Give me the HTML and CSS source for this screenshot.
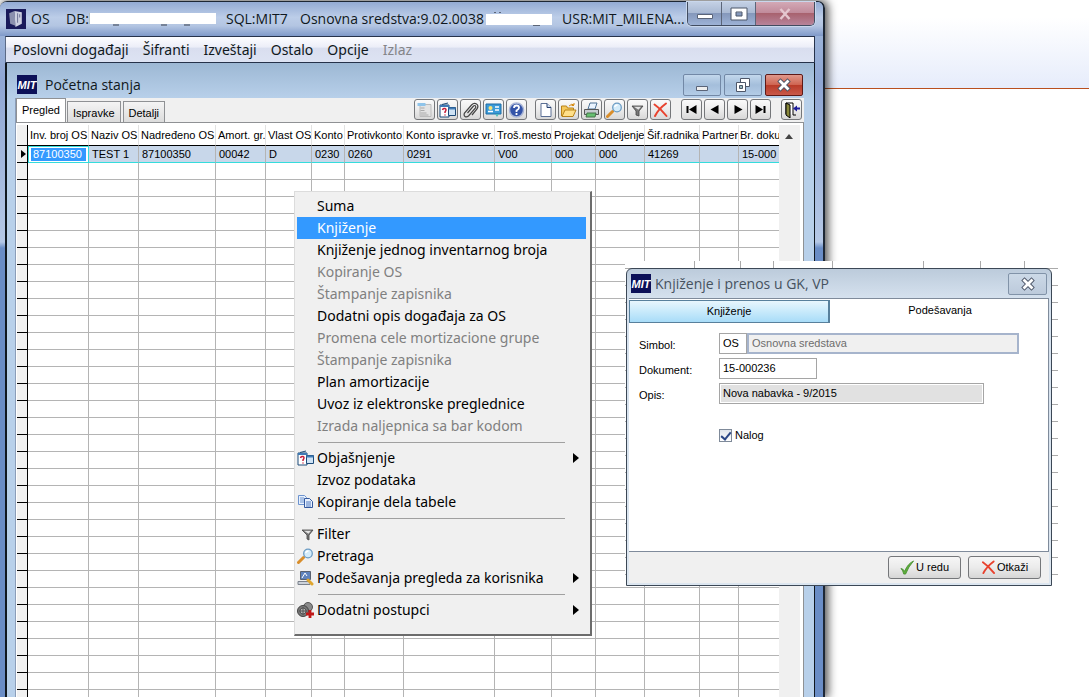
FILE: index.html
```html
<!DOCTYPE html>
<html lang="sr">
<head>
<meta charset="utf-8">
<title>OS - Početna stanja</title>
<link rel="stylesheet" href="styles.css">
</head>
<body>
<svg class="defs" aria-hidden="true">
  <symbol id="i-windows" viewBox="0 0 17 16"><path d="M1 3h9v12H1z" fill="#fff" stroke="#1c4a78"/><path d="M1 3h9v2H1z" fill="#3f7ab5"/><path d="M3 2.500 9 1" stroke="#1c4a78"/><path d="M9.500 5.500h7v8h-7z" fill="#cfe3f5" stroke="#1c4a78"/><path d="M9.500 5.500h7v2h-7z" fill="#3f7ab5"/><path d="M3.500 8q.500-2 2.500-1.500t0 3.500v1M6 12.500v1" stroke="#c8203c" stroke-width="1.500" fill="none"/></symbol>
  <symbol id="i-lens" viewBox="0 0 17 16"><path d="m1.500 14.500 5-5" stroke="#d98e2b" stroke-width="3" stroke-linecap="round"/><circle cx="11" cy="5.500" r="4.300" fill="#d4ecfa" stroke="#6b9cc4" stroke-width="1.300"/><path d="M8.500 5q1-2 3-2" stroke="#fff" stroke-width="1.300" fill="none"/></symbol>
  <symbol id="i-funnel" viewBox="0 0 17 16"><path d="M5 4h11l-4 5v5l-2-1V9z" fill="#777" stroke="#444" stroke-width=".8"/><path d="M7 4.800h7l-2.500 3z" fill="#e4e4e4"/></symbol>
  <symbol id="i-cross" viewBox="0 0 16 16"><path d="M2 2.500q6 4 12 11.500M13.500 1.500Q6 7 2.500 14" stroke="#e8422e" stroke-width="2" fill="none" stroke-linecap="round"/></symbol>
  <symbol id="i-close" viewBox="0 0 16 14"><path d="m4.500 3.500 7 7M11.500 3.500l-7 7" stroke="#4d5668" stroke-width="4.600" stroke-linecap="square"/><path d="m4.500 3.500 7 7M11.500 3.500l-7 7" stroke="#fff" stroke-width="2.800" stroke-linecap="square"/></symbol>
</svg>

<div class="desktop">
  <div class="ribbon"></div>

  <section class="window">
    <header class="titlebar">
      <svg class="app-icon" viewBox="0 0 19 19"><rect width="19" height="19" fill="#191a5a"/><path d="m3 4 5-2 1 14-5-2z" fill="#8b90ae"/><path d="m8 2 7 1v11l-6 3z" fill="#cdd0e0"/><path d="M11 4v9M13 5v3" stroke="#73789a"/></svg>
      <span class="t-name">OS</span>
      <span class="t-db">DB:l</span>
      <svg class="mask mask-long" viewBox="0 0 126 14"><rect width="126" height="11" y="1" fill="#fff"/><path d="M23 13h6M71 13h6M94 13h6" stroke="#39414f"/></svg>
      <span class="t-sql">SQL:MIT7</span>
      <span class="t-ver">Osnovna sredstva:9.02.0038</span>
      <svg class="mask mask-short" viewBox="0 0 66 14"><path d="M8 .5h2M13 .5h2M47 13.500h7" stroke="#5b6577"/><rect width="66" height="11" y="2" fill="#fff"/></svg>
      <span class="t-usr">USR:MIT_MILENA...</span>
      <div class="caption">
        <button aria-label="Minimize"><svg viewBox="0 0 18 14"><path d="M1.500 7.500h15v4h-15z" fill="#fff" stroke="#5a6478"/></svg></button>
        <button aria-label="Maximize"><svg viewBox="0 0 18 14"><path d="M1 1h16v12H1zM6 5h6v4H6z" fill="#fff" fill-rule="evenodd" stroke="#4d5668"/></svg></button>
        <button class="cap-close" aria-label="Close"><svg viewBox="0 0 16 14"><path d="m3.500 2 9 10M12.500 2l-9 10" stroke="#e4c6ce" stroke-width="2.500"/></svg></button>
      </div>
    </header>

    <nav class="menubar">
      <button>Poslovni događaji</button><button>Šifranti</button><button>Izveštaji</button><button>Ostalo</button><button>Opcije</button><button disabled>Izlaz</button>
    </nav>

    <div class="child">
      <header class="child-title">
        <span class="mit">MIT</span>
        <h1>Početna stanja</h1>
        <div class="child-caption">
          <button aria-label="Minimize"><svg viewBox="0 0 16 14"><path d="M2.500 8.500h11v4h-11z" fill="#eee" stroke="#5a6478"/></svg></button>
          <button aria-label="Restore"><svg viewBox="0 0 16 14"><path d="M5.500.500h9v8h-9z" fill="#fff" stroke="#4d5668"/><path d="M1.500 4.500h9v9h-9z" fill="#fff" stroke="#4d5668"/><path d="M4.500 7.500h3v3h-3z" fill="#9bb" stroke="#4d5668"/></svg></button>
          <button class="red" aria-label="Close"><svg><use href="#i-close"/></svg></button>
        </div>
      </header>

      <div class="child-body">
        <div class="toolrow">
          <div class="tabs"><button class="active">Pregled</button><button>Ispravke</button><button>Detalji</button></div>
          <div class="tools">
            <div class="group">
              <button aria-label="Forma"><svg viewBox="0 0 16 16"><path d="M3.500 2.500h11v12h-11z" fill="#e3e3e3" stroke="#bbb"/><path d="M1 1h8v3H1z" fill="#8fc4ea"/><path d="M4 6h4M4 8.500h4M4 11h6M4 13h8" stroke="#aaa"/></svg></button>
              <button aria-label="Objašnjenje"><svg><use href="#i-windows"/></svg></button>
              <button aria-label="Prilog"><svg viewBox="0 0 16 16"><path d="m5 11 6-7q1.500-1 2 0t0 2l-7 8q-2 1.500-3.500.500T2 11l7-8q2.500-2.500 5-1t.500 5l-5 6" fill="none" stroke="#444" stroke-width="1.200"/></svg></button>
              <button aria-label="Kartica"><svg viewBox="0 0 17 16"><path d="M1 2h15v10H1z" fill="#3b9bd8" stroke="#1e6ca6"/><circle cx="5.500" cy="6" r="2" fill="#f6e27a"/><path d="M3 9.500h5M10 5h4M10 8h4" stroke="#fff" stroke-width="1.500"/><path d="m10 12 2 3 2-3z" fill="#5bb"/></svg></button>
              <button aria-label="Pomoć"><svg viewBox="0 0 16 16"><circle cx="8" cy="8" r="7" fill="#3454a8" stroke="#a9b5d6" stroke-width="1.500"/><path d="M5.500 6q0-2.500 2.500-2.500t2.500 2.200Q10.500 7 8 8.500V10M8 11v2" stroke="#fff" stroke-width="1.800" fill="none"/></svg></button>
            </div>
            <div class="group">
              <button aria-label="Novi"><svg viewBox="0 0 16 16"><path d="M3.500 1.500h6l4 4v9h-10z" fill="#fff" stroke="#5b6f94"/><path d="M9.500 1.500v4h4" fill="#cfdcf2" stroke="#27406e"/></svg></button>
              <button aria-label="Otvori"><svg viewBox="0 0 17 16"><path d="M1.500 14V4h5l1 2h6v3" fill="#f5c95c" stroke="#b98318"/><path d="m2 14.500 3-6.500h11l-3 6.500z" fill="#ffe08a" stroke="#b98318"/><path d="M9 4q3-3 5-1V1M14 3.500h-2.500" stroke="#d68a10" fill="none"/></svg></button>
              <button aria-label="Štampaj"><svg viewBox="0 0 17 16"><path d="M5 7 7 1h7l-2 6z" fill="#eaf4ff" stroke="#4f7396"/><path d="M1.500 7.500h14v5h-14z" fill="#c7ccd1" stroke="#555"/><path d="M4 11h9l-1 4H3z" fill="#66bf71" stroke="#46744c"/></svg></button>
              <button aria-label="Pretraga"><svg><use href="#i-lens"/></svg></button>
              <button aria-label="Filter"><svg viewBox="0 0 16 16"><path d="M2.500 4h11l-4 5v5l-3-1V9z" fill="#777" stroke="#444" stroke-width=".8"/><path d="M4.500 4.800h7l-2.500 3z" fill="#e4e4e4"/></svg></button>
              <button aria-label="Briši"><svg><use href="#i-cross"/></svg></button>
            </div>
            <div class="group">
              <button aria-label="Prvi"><svg viewBox="0 0 16 16"><path d="M3 4h2v7H3zM13 3v9L5.500 7.500z" fill="#000"/></svg></button>
              <button aria-label="Prethodni"><svg viewBox="0 0 16 16"><path d="M12 3v9L4 7.500z" fill="#000"/></svg></button>
              <button aria-label="Sledeći"><svg viewBox="0 0 16 16"><path d="M5 3v9l8-4.500z" fill="#000"/></svg></button>
              <button aria-label="Poslednji"><svg viewBox="0 0 16 16"><path d="M3 3v9l7.500-4.500zM11 4h2v7h-2z" fill="#000"/></svg></button>
            </div>
            <div class="group">
              <button aria-label="Izlaz"><svg viewBox="0 0 17 16"><path d="M3 12V1h7v12h3" fill="#fff" stroke="#000"/><path d="m3 1 4 2v13l-4-3z" fill="#87863a" stroke="#000"/><path d="m10 6.500 4-3v2h3v2h-3v2z" fill="#1c1c9c"/></svg></button>
            </div>
          </div>
        </div>

        <div class="gridbox">
          <div class="table-wrap">
            <table class="grid">
              <colgroup><col class="w-mark"><col class="w61"><col class="w50"><col class="w77"><col class="w50"><col class="w46"><col class="w33"><col class="w59"><col class="w91"><col class="w57"><col class="w44"><col class="w49"><col class="w55"><col class="w39"><col></colgroup>
              <thead><tr><th></th><th>Inv. broj OS</th><th>Naziv OS</th><th>Nadređeno OS</th><th>Amort. gr.</th><th>Vlast OS</th><th>Konto</th><th>Protivkonto</th><th>Konto ispravke vr.</th><th>Troš.mesto</th><th>Projekat</th><th>Odeljenje</th><th>Šif.radnika</th><th>Partner</th><th>Br. doku</th></tr></thead>
              <tbody id="rows">
                <tr class="current"><td class="pointer"><svg viewBox="0 0 6 8"><path d="M0 0v8l5-4z" fill="#000"/></svg></td><td class="cell-edit"><span>87100350</span></td><td>TEST 1</td><td>87100350</td><td>00042</td><td>D</td><td>0230</td><td>0260</td><td>0291</td><td>V00</td><td>000</td><td>000</td><td>41269</td><td></td><td>15-000</td></tr>
              </tbody>
            </table>
          </div>
          <div class="scroll"><svg viewBox="0 0 8 5"><path d="M0 5h8L4 0z" fill="#444"/></svg></div>
        </div>
      </div>
    </div>
  </section>

  <div class="popup" role="menu">
    <button>Suma</button>
    <button class="hot">Knjiženje</button>
    <button>Knjiženje jednog inventarnog broja</button>
    <button disabled>Kopiranje OS</button>
    <button disabled>Štampanje zapisnika</button>
    <button>Dodatni opis događaja za OS</button>
    <button disabled>Promena cele mortizacione grupe</button>
    <button disabled>Štampanje zapisnika</button>
    <button>Plan amortizacije</button>
    <button>Uvoz iz elektronske preglednice</button>
    <button disabled>Izrada naljepnica sa bar kodom</button>
    <hr>
    <button class="sub"><svg><use href="#i-windows"/></svg>Objašnjenje</button>
    <button>Izvoz podataka</button>
    <button><svg viewBox="0 0 17 16"><path d="M1.500 1.500h6l2 2v7h-8z" fill="#e8f1fd" stroke="#6c93cf"/><path d="M3 4h4M3 6h4M3 8h4" stroke="#6c93cf"/><path d="M7.500 4.500h5l3 3v6h-8z" fill="#e8f1fd" stroke="#33589f"/><path d="M9 8h5M9 10h5M9 12h5" stroke="#4f78c0"/></svg>Kopiranje dela tabele</button>
    <hr>
    <button><svg><use href="#i-funnel"/></svg>Filter</button>
    <button><svg><use href="#i-lens"/></svg>Pretraga</button>
    <button class="sub"><svg viewBox="0 0 17 16"><path d="M3.500 1.500h10v8h-10z" fill="#5f83bd" stroke="#59616f"/><path d="m5 8 3-5 2 3" stroke="#fff" fill="none"/><path d="M1 11.500h12v3H1z" fill="#ccd2da" stroke="#7b828c"/><path d="m11 10 4 4" stroke="#e0a62e" stroke-width="3" stroke-linecap="round"/></svg>Podešavanja pregleda za korisnika</button>
    <hr>
    <button class="sub"><svg viewBox="0 0 17 16"><circle cx="11" cy="5" r="4.500" fill="#8b8b8b" stroke="#555"/><circle cx="6" cy="9" r="5.500" fill="#777" stroke="#444"/><circle cx="6" cy="9" r="3" fill="#b5b5b5" stroke="#555"/><path d="M6 5v8M2 9h8" stroke="#555"/><path d="M13 8v8M9 12h8" stroke="#c01818" stroke-width="2.800"/></svg>Dodatni postupci</button>
  </div>

  <div class="sheet">
    <section class="dialog">
      <header class="dialog-title">
        <span class="mit">MIT</span>
        <h2>Knjiženje i prenos u GK, VP</h2>
        <button aria-label="Zatvori"><svg><use href="#i-close"/></svg></button>
      </header>
      <div class="dialog-client">
        <div class="dialog-tabs"><button class="raised">Knjiženje</button><button class="flat">Podešavanja</button></div>
        <form class="form">
          <label for="simbol">Simbol:</label>
          <div class="pair"><input id="simbol" class="f-code" value="OS"><input class="f-name" value="Osnovna sredstava" aria-label="Naziv simbola" readonly></div>
          <label for="dokument">Dokument:</label>
          <input id="dokument" class="f-doc" value="15-000236">
          <label for="opis">Opis:</label>
          <input id="opis" class="f-opis" value="Nova nabavka - 9/2015" readonly>
          <div class="check"><input type="checkbox" id="nalog" checked><label for="nalog">Nalog</label></div>
        </form>
      </div>
      <footer class="dialog-foot">
        <button><svg viewBox="0 0 16 16"><path d="M1 9q2 0 4 3 3-8 9.500-11Q9 7 6 15H4Q3 11 1 9z" fill="#5fae3c" stroke="#3f8a2a" stroke-width=".8"/></svg>U redu</button>
        <button><svg><use href="#i-cross"/></svg>Otkaži</button>
      </footer>
    </section>
  </div>
</div>
<script src="app.js"></script>
</body>
</html>
```
FILE: app.js
```js
// Fill the grid with blank records below the current one.
const body = document.getElementById('rows');
const columns = document.querySelectorAll('.grid col').length;
for (let i = 0; i < 32; i++) {
  const row = body.insertRow();
  for (let c = 0; c < columns; c++) row.insertCell();
}
```
FILE: styles.css
```css
* { box-sizing: border-box; }
html, body { height: 100%; margin: 0; }
body { font: 14px/20px "Open Sans", sans-serif; color: #101820; background: #fff; overflow: hidden; }
button { font: inherit; color: inherit; background: none; border: 0; padding: 0; margin: 0; }
h1, h2 { font: inherit; margin: 0; }
svg { display: block; fill: none; flex: none; }
.defs { position: absolute; width: 0; height: 0; }

.desktop { position: relative; height: 100%; overflow: hidden; }
.ribbon { height: 89px; border-bottom: 1px solid #b9501f; background: linear-gradient(#fff 20%, #e6ecfb); }

/* main window */
.window {
  position: absolute; left: 0; right: 264px; top: 1px; bottom: 0;
  display: flex; flex-direction: column;
  padding: 0 8px 0 5px;
  border: solid #1d2735; border-width: 1px 2px 0 0; border-radius: 7px 7px 0 0;
  background: linear-gradient(#a3bbdc, #8fa6d3 80px, #b5c8e6 240px, #6a8dc6 246px);
  box-shadow: 2px 0 10px 1px rgba(0, 0, 0, .7);
}
.titlebar { display: flex; align-items: center; height: 34px; margin: 0 -8px 0 -5px; padding: 0 8px 0 6px; border-radius: 6px 6px 0 0; background: linear-gradient(#93abd4, #bccde8 45%, #b3c5e2 70%, #7f99c9); white-space: nowrap; }
.app-icon { width: 20px; height: 20px; }
.t-name { margin-left: 5px; width: 35px; }
.t-db { width: 24px; }
.mask { height: 14px; position: relative; }
.mask-long { width: 126px; }
.t-sql { margin-left: 10px; width: 74px; }
.t-ver { width: 186px; }
.mask-short { width: 66px; }
.t-usr { margin-left: 10px; }
.caption { display: flex; align-self: flex-start; margin-left: auto; border: 1px solid #414c60; border-top: 0; border-radius: 0 0 5px 5px; box-shadow: 0 0 0 1px #c9d7ec; overflow: hidden; }
.caption button { display: flex; align-items: center; justify-content: center; width: 34px; height: 23px; border-right: 1px solid #5b6579; background: linear-gradient(#c3d0e4, #a9b9d3 48%, #8598bb 50%, #9db2d6); }
.caption button svg { width: 18px; height: 14px; }
.caption .cap-close { width: 58px; border: 0; background: linear-gradient(#d3a9b6, #c08a9a 48%, #a8626f 50%, #b7849a); }

.menubar { display: flex; gap: 14px; align-items: center; height: 27px; padding: 0 7px; border: 1px solid #26324a; border-left-color: #5b6a86; background: linear-gradient(#fdfdff, #eceef8 40%, #d9deef 45%, #dde3f3); font-family: "Noto Sans", sans-serif; }
.menubar button { white-space: nowrap; }
button:disabled { color: #838488; }

/* child window */
.child { flex: 1; min-height: 0; display: flex; flex-direction: column; border: solid #101820; border-width: 0 1px 0 2px; background: linear-gradient(#9db8d4, #b8d0ea 36px); }
.child-title { display: flex; align-items: center; height: 35px; padding: 8px 11px 0 10px; }
.mit { flex: none; width: 20px; height: 19px; background: #0c1058; color: #fff; font: italic bold 11px/20px "Liberation Sans", sans-serif; text-align: center; overflow: hidden; }
h1 { margin-left: 8px; }
.child-caption { display: flex; gap: 3px; margin-left: auto; }
.child-caption button { display: flex; align-items: center; justify-content: center; width: 38px; height: 22px; border: 1px solid #7288a6; border-radius: 2px; background: linear-gradient(#c3d7ec, #a4bedb 50%, #b3cce6); }
.child-caption svg { width: 16px; height: 14px; }
.child-caption .red { border-color: #5e1a18; background: linear-gradient(#e0998c, #cf6552 48%, #b83a27 50%, #c9594a); }
.child-body { flex: 1; min-height: 0; display: flex; flex-direction: column; margin: 0 10px 0 8px; background: #f0f0f0; border-left: 1px solid #8b9db8; font: 11px/13px "Liberation Sans", sans-serif; color: #000; }

.toolrow { display: flex; justify-content: space-between; height: 24px; }
.tabs { display: flex; align-items: flex-end; }
.tabs button { height: 21px; padding: 2px 5px 0; margin-right: 2px; border: 1px solid #8f9194; border-bottom: 0; background: linear-gradient(#f4f4f4, #dcdcdc); }
.tabs .active { height: 24px; margin-right: 1px; padding-top: 0; background: #fff; }
.tools { display: flex; gap: 10px; padding: 1px 2px 0 0; }
.group { display: flex; gap: 2px; }
.group:first-child { margin-right: -2px; }
.group button { display: flex; align-items: center; justify-content: center; width: 21px; height: 21px; border: 1px solid #75777a; border-radius: 3px; background: linear-gradient(#fafafa, #ececec 50%, #d8d8d8); color: #000; }
.group svg { width: 17px; height: 16px; }

.gridbox { flex: 1; min-height: 0; display: flex; padding: 2px 3px 0 1px; border-top: 1px solid #8f9194; border-right: 1px solid #8f9194; background: #fff; }
.table-wrap { flex: 1; min-width: 0; overflow: hidden; }
.grid { width: 100%; table-layout: fixed; border-collapse: separate; border-spacing: 0; }
.w-mark { width: 11px; } .w61 { width: 61px; } .w50 { width: 50px; } .w77 { width: 77px; } .w46 { width: 46px; } .w33 { width: 33px; } .w59 { width: 59px; } .w91 { width: 91px; } .w57 { width: 57px; } .w44 { width: 44px; } .w49 { width: 49px; } .w55 { width: 55px; } .w39 { width: 39px; }
.grid th, .grid td { padding: 0 0 0 3px; text-align: left; font-weight: normal; white-space: nowrap; overflow: hidden; }
.grid th { height: 21px; padding-left: 2px; border-bottom: 1px solid #000; border-right: 1px solid #e2e2e2; }
.grid th:last-child { padding-left: 1px; }
.grid td { height: 17px; border: solid #b4b4b4; border-width: 0 1px 1px 0; }
.grid td:last-child, .grid th:last-child { border-right: 0; }
.grid tr > :first-child { background: #f0f0f0; border-right-color: #000; border-bottom-color: #000; }
.grid .current td { background: #c8d7ea; border-bottom-color: #34dcdc; }
.grid .current .pointer { padding-left: 4px; background: #f0f0f0; border-bottom-color: #000; }
.pointer svg { width: 6px; height: 8px; }
.grid .current .cell-edit { padding: 0 2px; background: #fff; border: 1px solid #34dcdc; }
.cell-edit span { display: block; padding-left: 2px; background: #3399ff; color: #fff; }
.scroll { width: 21px; background: #f0f0f0; padding: 9px 0 0 6px; }
.scroll svg { width: 8px; height: 5px; }

/* context menu */
.popup { position: absolute; left: 294px; top: 191px; width: 298px; padding: 3px 4px 13px 2px; background: #f0f0f0; border: 1px solid #dcdcdc; border-right: 2px solid #6c6c6c; border-bottom: 2px solid #6c6c6c; color: #000; font-family: "Noto Sans", sans-serif; }
.popup button { position: relative; display: flex; align-items: center; width: 100%; height: 22px; padding-left: 20px; white-space: nowrap; text-align: left; }
.popup button:disabled { color: #808080; }
.popup .hot { background: #3399ff; color: #fff; }
.popup button svg { width: 17px; height: 16px; margin-left: -20px; margin-right: 3px; }
.popup .sub::after { content: ""; margin-left: auto; margin-right: 7px; border: solid transparent; border-width: 5px 0 5px 6px; border-left-color: #000; }
.popup hr { height: 1px; margin: 5px 21px 4px; border: 0; background: #a0a0a0; }

/* dialog lying over a strip of another grid */
.sheet {
  position: absolute; left: 625px; top: 261px; width: 433px; padding: 7px 6px 0 1px;
  background:
    linear-gradient(#aaa, #aaa) 69px 0/1px 7px no-repeat, linear-gradient(#aaa, #aaa) 115px 0/1px 7px no-repeat,
    linear-gradient(#aaa, #aaa) 148px 0/1px 7px no-repeat, linear-gradient(#aaa, #aaa) 207px 0/1px 7px no-repeat,
    linear-gradient(#aaa, #aaa) 298px 0/1px 7px no-repeat, linear-gradient(#aaa, #aaa) 355px 0/1px 7px no-repeat,
    linear-gradient(#aaa, #aaa) 399px 0/1px 7px no-repeat,
    repeating-linear-gradient(#fff 0 7px, #aaa 7px 8px, #fff 8px 17px);
}
.dialog { padding: 0 2px 2px; border: 1px solid #3c4856; border-radius: 6px 6px 0 0; background: linear-gradient(#bccbdb, #d5e1ee 29px, #dce6f0); font: 11px/13px "Liberation Sans", sans-serif; color: #000; }
.dialog-title { display: flex; align-items: center; height: 29px; padding: 0 2px; }
h2 { margin-left: 4px; font: 14px/20px "Open Sans", sans-serif; color: #46525f; }
.dialog-title button { display: flex; align-items: center; justify-content: center; margin-left: auto; width: 39px; height: 22px; border: 1px solid #8193a8; border-radius: 2px; background: linear-gradient(#ccd9e7, #bccadb); }
.dialog-title svg { width: 16px; height: 14px; }
.dialog-client { min-height: 254px; border: 1px solid #7f8b9b; border-left: 0; background: #fff; }
.dialog-tabs { display: grid; grid-template-columns: 201px 1fr; height: 24px; }
.dialog-tabs .raised { margin-top: 1px; border: 1px solid #58809c; border-right-width: 2px; background: linear-gradient(#e8f6fd, #c8eafb 50%, #a8dcf8); }
.dialog-tabs .flat { padding: 0 0 2px 2px; }
.form { display: grid; grid-template-columns: 80px 1fr; align-items: center; row-gap: 4px; padding: 10px 29px 0 10px; }
.form input { font: inherit; color: #000; height: 21px; margin: 0; padding: 0 3px 2px; border: 1px solid #a5a5a5; background: #fff; }
.form > label { padding-top: 4px; }
.pair { display: flex; }
.form .f-code { width: 28px; }
.form .f-name { flex: 1; min-width: 0; border: 2px solid #a6b4cc; background: #f0f0f0; color: #6d6d6d; padding-bottom: 1px; }
.form .f-doc { width: 98px; }
.form .f-opis { width: 265px; background: #e1e1e1; box-shadow: inset 0 0 0 1px #fff; }
.check { grid-column: 2; display: flex; align-items: center; gap: 3px; margin-top: 21px; }
.form input[type="checkbox"] { appearance: none; width: 13px; height: 13px; padding: 0; border: 1px solid #7f8a99; display: grid; place-items: center; background: linear-gradient(#dfe4ec, #fff); }
.form input[type="checkbox"]::before { content: ""; width: 4px; height: 8px; margin-top: -2px; border: solid #2b4787; border-width: 0 2px 2px 0; transform: rotate(40deg); }
.dialog-foot { display: flex; justify-content: flex-end; align-items: center; gap: 7px; height: 31px; padding: 0 8px 0 0; background: #f0f0f0; }
.dialog-foot button { display: flex; align-items: center; justify-content: center; width: 73px; height: 23px; gap: 1px; border: 1px solid #75777a; border-radius: 3px; background: linear-gradient(#f6f6f6, #ebebeb 50%, #d6d6d6); }
.dialog-foot svg { width: 15px; height: 15px; }
```
